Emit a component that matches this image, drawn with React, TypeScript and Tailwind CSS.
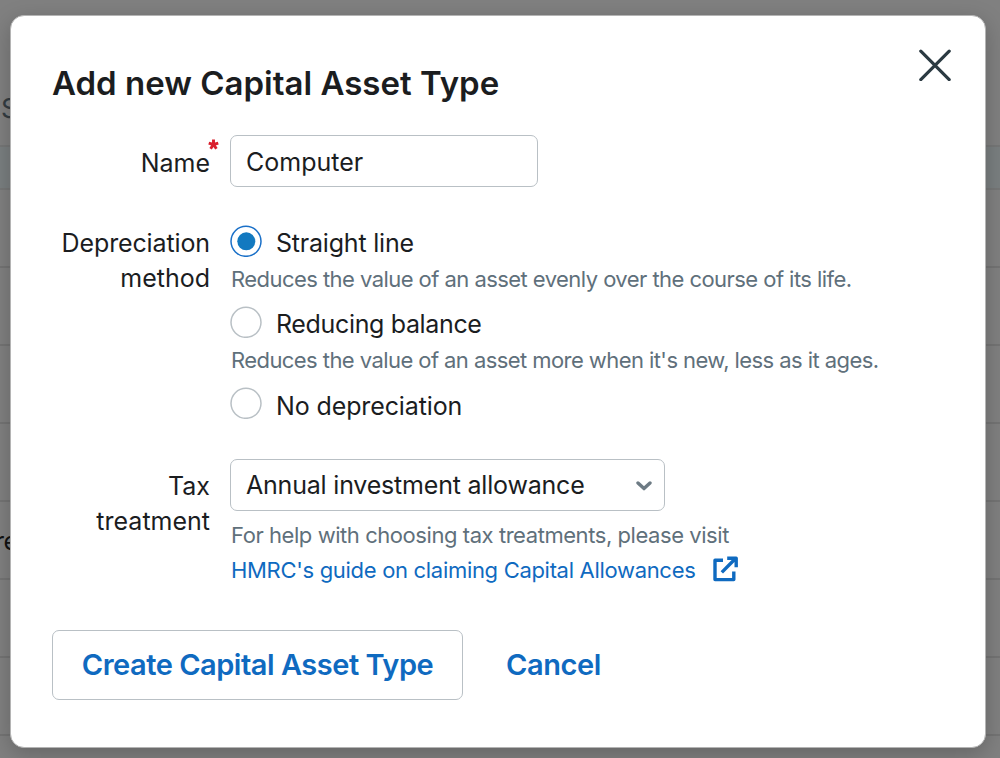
import React from "react";

const rows = ["", "", "", "", "re", "", ""];

function Backdrop() {
  return (
    <div className="h-full w-full overflow-hidden bg-[#808080]">
      <div className="flex h-[147px] items-end border-b-2 border-[#767777] pb-[20px]">
        <span className="ml-[1px] text-[27px] leading-[32px] text-[#343c42]">S</span>
      </div>
      <div className="h-[43px] border-b-2 border-[#767777] bg-[#7a7f80]" />
      {rows.map((text, i) => (
        <div key={i} className="flex h-[78px] items-center border-b-2 border-[#747474]">
          {text && (
            <span className="-ml-[5px] pt-[3px] text-[25px] tracking-[-0.5px] whitespace-nowrap text-[#111]">
              {text}
            </span>
          )}
        </div>
      ))}
    </div>
  );
}

function Radio({ checked = false }: { checked?: boolean }) {
  return (
    <svg viewBox="0 0 32 32" className="size-[32px] shrink-0" fill="none">
      <circle cx="16" cy="16.3" r="15" stroke={checked ? "#1a70c8" : "#b9c0c5"} strokeWidth="1.5" />
      {checked && <circle cx="16.3" cy="16.3" r="9" fill="#1279c0" />}
    </svg>
  );
}

export default function App() {
  return (
    <div className="relative h-[758px] w-[1000px] overflow-hidden font-['Inter','Liberation_Sans',sans-serif] text-[25px] text-[#1b1d1f]">
      <Backdrop />
      <div
        role="dialog"
        className="absolute top-[15px] left-[10px] flex h-[733px] w-[976px] flex-col rounded-[14px] border border-[#b4b4b4] bg-white pl-[41px] shadow-[0_6px_22px_rgba(0,0,0,0.22)]"
      >
        <header className="flex h-[119px] justify-between pt-[33px] pr-[34px]">
          <h1 className="mt-[10px] text-[33px] leading-[48px] font-semibold whitespace-nowrap">
            Add new Capital Asset Type
          </h1>
          <button aria-label="Close" className="size-[32px]">
            <svg viewBox="0 0 32 32" className="size-[32px]" fill="none" stroke="#2b3a42" strokeWidth="3.2" strokeLinecap="round">
              <path d="M1.8 2.2 30.2 30.6M30.2 2.2 1.8 30.6" />
            </svg>
          </button>
        </header>

        <div className="flex h-[90px]">
          <label className="relative mr-[20px] w-[158px] pt-[11px] text-right leading-[35px]">
            Name
            <svg viewBox="0 0 12 12" className="absolute top-[4px] -right-[9px] size-[11px]" fill="none" stroke="#d9202d" strokeWidth="3.2">
              <path d="M6 6V.6M6 6 .8 4.4M6 6l5.2-1.6M6 6 2.8 10.6M6 6l3.2 4.6" />
            </svg>
          </label>
          <div className="flex h-[52px] w-[308px] items-center rounded-[7px] border-[1.5px] border-[#b9c0c5] pt-[3px] pl-[15px]">
            Computer
          </div>
        </div>

        <div className="flex h-[234px]">
          <div className="mr-[20px] w-[158px] pt-[1px] text-right leading-[35px]">
            <div className="tracking-[-0.12px]">Depreciation</div>
            <div>method</div>
          </div>
          <div className="flex flex-col whitespace-nowrap">
            <div className="flex h-[36px] items-start gap-[14px] leading-[36px]">
              <Radio checked />
              <span className="tracking-[-0.2px]">Straight line</span>
            </div>
            <p className="h-[45px] pl-px text-[22px] leading-[36px] tracking-[-0.55px] text-[#5f707b]">
              Reduces the value of an asset evenly over the course of its life.
            </p>
            <div className="flex h-[36px] items-start gap-[14px] leading-[36px]">
              <Radio />
              <span className="tracking-[-0.35px]">Reducing balance</span>
            </div>
            <p className="h-[45px] pl-px text-[22px] leading-[36px] tracking-[-0.57px] text-[#5f707b]">
              Reduces the value of an asset more when it's new, less as it ages.
            </p>
            <div className="flex h-[36px] items-start gap-[14px] leading-[38px]">
              <Radio />
              <span className="tracking-[-0.12px]">No depreciation</span>
            </div>
          </div>
        </div>

        <div className="flex h-[171px]">
          <div className="mr-[20px] w-[158px] pt-[10px] text-right leading-[35px]">
            <div>Tax</div>
            <div>treatment</div>
          </div>
          <div className="whitespace-nowrap">
            <div className="flex h-[52px] w-[435px] items-center justify-between rounded-[7px] border-[1.5px] border-[#b9c0c5] pt-[2px] pr-[12px] pl-[15px]">
              <span className="tracking-[-0.2px]">Annual investment allowance</span>
              <svg viewBox="0 0 16 10" className="h-[10px] w-[16px]" fill="none" stroke="#6d7b84" strokeWidth="3.4" strokeLinecap="round" strokeLinejoin="round">
                <path d="M2 2 8 7.6 14 2" />
              </svg>
            </div>
            <p className="mt-[7px] pl-px text-[22px] leading-[35px] tracking-[-0.44px] text-[#5f707b]">
              For help with choosing tax treatments, please visit
            </p>
            <a className="flex items-center text-[22px] leading-[35px] text-[#0f6ac0]">
              <span className="w-[482px] pl-px tracking-[-0.31px]">HMRC's guide on claiming Capital Allowances</span>
              <svg viewBox="0 0 26 26" className="mb-[4px] size-[26px]" fill="none" stroke="#0f6ac0" strokeWidth="3.4" strokeLinejoin="round">
                <path d="M11 4.2H3V23.6H21.8V15.5M9.8 16.4 23 3M15.2 2.2H24.2V11.2" />
              </svg>
            </a>
          </div>
        </div>

        <footer className="flex h-[70px] items-center text-[29px] font-semibold text-[#0f6ac0]">
          <button className="h-[70px] w-[411px] rounded-[7px] border-[1.5px] border-[#b9c0c5] tracking-[-0.48px] whitespace-nowrap">
            Create Capital Asset Type
          </button>
          <button className="ml-[43px] tracking-[-0.4px]">Cancel</button>
        </footer>
      </div>
    </div>
  );
}
